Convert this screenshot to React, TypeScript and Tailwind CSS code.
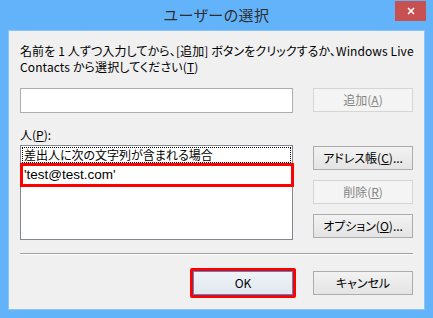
import { X } from "lucide-react";

const jp = "font-['Noto_Sans_CJK_JP','Noto_Sans',sans-serif] [font-feature-settings:'palt']";

const Mn = ({ c }: { c: string }) => <span className="underline underline-offset-[1px]">{c}</span>;

const Btn = ({
  children,
  disabled,
  className = "",
}: {
  children: React.ReactNode;
  disabled?: boolean;
  className?: string;
}) => (
  <button
    className={
      "w-[100px] h-[24px] border text-[12px] leading-none flex items-center justify-center " +
      (disabled
        ? "border-[#d5d5d5] bg-[#f4f4f4] text-[#838383] "
        : "border-[#acacac] bg-gradient-to-b from-[#f2f2f2] to-[#e4e4e4] text-black ") +
      className
    }
  >
    {children}
  </button>
);

export default function App() {
  return (
    <div className={`w-[433px] h-[318px] bg-[#63b3fb] flex flex-col ${jp}`}>
      {/* title bar */}
      <div className="h-[30px] relative flex items-center justify-center">
        <span className="text-[15px] text-[#2e2e2e] tracking-[0.5px]">ユーザーの選択</span>
        <div className="absolute right-[7px] top-[1px] w-[31px] h-[20px] bg-[#c75050] flex items-center justify-center">
          <X className="w-[10px] h-[10px] text-white" strokeWidth={4} />
        </div>
      </div>

      {/* client */}
      <div className="mx-2 h-[280px] bg-[#f0f0f0] border border-[#8cc5f6] px-[11px] flex flex-col text-black">
        <p className="mt-[12px] text-[12px] leading-[16px] whitespace-nowrap tracking-[0.1px]">
          名前を 1 人ずつ入力してから、[追加] ボタンをクリックするか、Windows Live
          <br />
          Contacts から選択してください(<Mn c="T" />)
        </p>

        <div className="mt-[13px] flex justify-between items-start">
          <div className="w-[273px] h-[25px] bg-white border border-[#abadb3]" />
          <Btn disabled>
            追加(<Mn c="A" />)
          </Btn>
        </div>

        <div className="mt-[14px] text-[12px] leading-[16px]">
          人(<Mn c="P" />):
        </div>

        <div className="mt-[2px] flex justify-between items-start">
          <div className="w-[273px] h-[95px] bg-white border border-[#828790] pt-[1px]">
            <div className="mx-[1px] h-[16px] border border-dotted border-black text-[12px] leading-[14px] pl-[1px]">
              差出人に次の文字列が含まれる場合
            </div>
            <div className="-mx-[1px] mr-[-2px] h-[24px] border-[3px] border-[#ff0000] flex items-center pl-[1px] text-[13.5px] font-['Liberation_Sans',sans-serif]">
              'test@test.com'
            </div>
          </div>
          <div className="mt-[1px] flex flex-col gap-[10px]">
            <Btn>
              アドレス帳(<Mn c="C" />)...
            </Btn>
            <Btn disabled>
              削除(<Mn c="R" />)
            </Btn>
            <Btn>
              オプション(<Mn c="O" />)...
            </Btn>
          </div>
        </div>

        <div className="mt-[13px] h-px bg-[#a0a0a0] border-b border-white box-content" />

        <div className="mt-[13px] flex justify-end items-center gap-[17px]">
          <div className="border-[3px] border-[#ff0000] rounded-[2px]">
            <Btn className="!border-[#3c8fde] !from-[#eef3f9] !to-[#e2e8ef]">OK</Btn>
          </div>
          <Btn>キャンセル</Btn>
        </div>
      </div>
    </div>
  );
}
